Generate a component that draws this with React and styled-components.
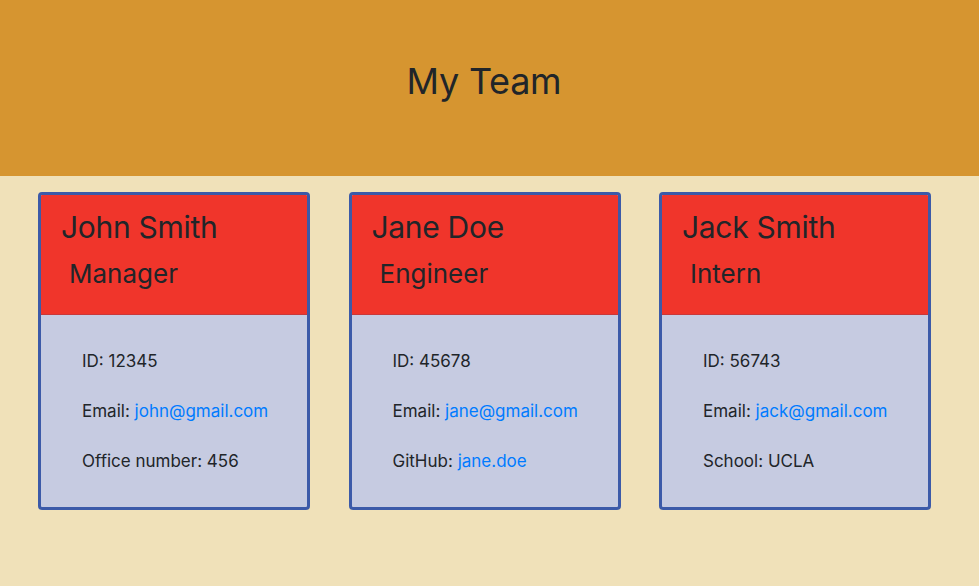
import React from "react";
import styled, { createGlobalStyle } from "styled-components";

const team = [
  {
    name: "John Smith",
    role: "Manager",
    id: "12345",
    email: "john@gmail.com",
    extra: { label: "Office number", value: "456" }
  },
  {
    name: "Jane Doe",
    role: "Engineer",
    id: "45678",
    email: "jane@gmail.com",
    extra: { label: "GitHub", value: "jane.doe", link: true }
  },
  {
    name: "Jack Smith",
    role: "Intern",
    id: "56743",
    email: "jack@gmail.com",
    extra: { label: "School", value: "UCLA" }
  }
];

const GlobalStyle = createGlobalStyle`
  html, body {
    margin: 0;
    padding: 0;
  }
  body {
    background: #f0e1b9;
    color: #212529;
    font-family: Inter, "Noto Sans", "Liberation Sans", sans-serif;
    min-height: 586px;
  }
`;

const App = () => (
  <>
    <GlobalStyle />
    <Jumbotron>
      <Title>My Team</Title>
    </Jumbotron>
    <CardRow>
      {team.map(member => (
        <Card key={member.id}>
          <CardHeader>
            <Name>{member.name}</Name>
            <Role>{member.role}</Role>
          </CardHeader>
          <CardBody>
            <Item>ID: {member.id}</Item>
            <Item>
              Email: <Link href="#">{member.email}</Link>
            </Item>
            <Item>
              {member.extra.label}:{" "}
              {member.extra.link ? (
                <Link href="#">{member.extra.value}</Link>
              ) : (
                member.extra.value
              )}
            </Item>
          </CardBody>
        </Card>
      ))}
    </CardRow>
  </>
);

const Jumbotron = styled.header`
  height: 176px;
  background: #d69530;
  display: flex;
  align-items: center;
  justify-content: center;
  padding: 0 11px 14px 0;
  box-sizing: border-box;
`;

const Title = styled.h1`
  margin: 0;
  font-size: 36px;
  font-weight: 400;
  letter-spacing: -0.25px;
`;

const CardRow = styled.main`
  display: flex;
  gap: 38.5px;
  padding: 16px 0 0 38px;
`;

const Card = styled.section`
  width: 272px;
  box-sizing: border-box;
  border: 3px solid #3c5aa8;
  border-radius: 4px;
  overflow: hidden;
  background: #c6cbe1;
`;

const CardHeader = styled.div`
  height: 120px;
  box-sizing: border-box;
  background: #f0352b;
  border-bottom: 1px solid #c9383a;
  padding: 14px 20px 0;
`;

const Name = styled.h2`
  margin: 0;
  font-size: 30px;
  font-weight: 400;
  line-height: 36px;
  letter-spacing: -0.3px;
`;

const Role = styled.h3`
  margin: 13px 0 0 8px;
  font-size: 26px;
  font-weight: 400;
  line-height: 32px;
`;

const CardBody = styled.ul`
  list-style: none;
  margin: 0;
  padding: 21px 20px 21px 41px;
`;

const Item = styled.li`
  font-size: 17px;
  line-height: 24px;
  padding: 13px 0;
`;

const Link = styled.a`
  color: #007bff;
  text-decoration: none;
`;

export default App;
